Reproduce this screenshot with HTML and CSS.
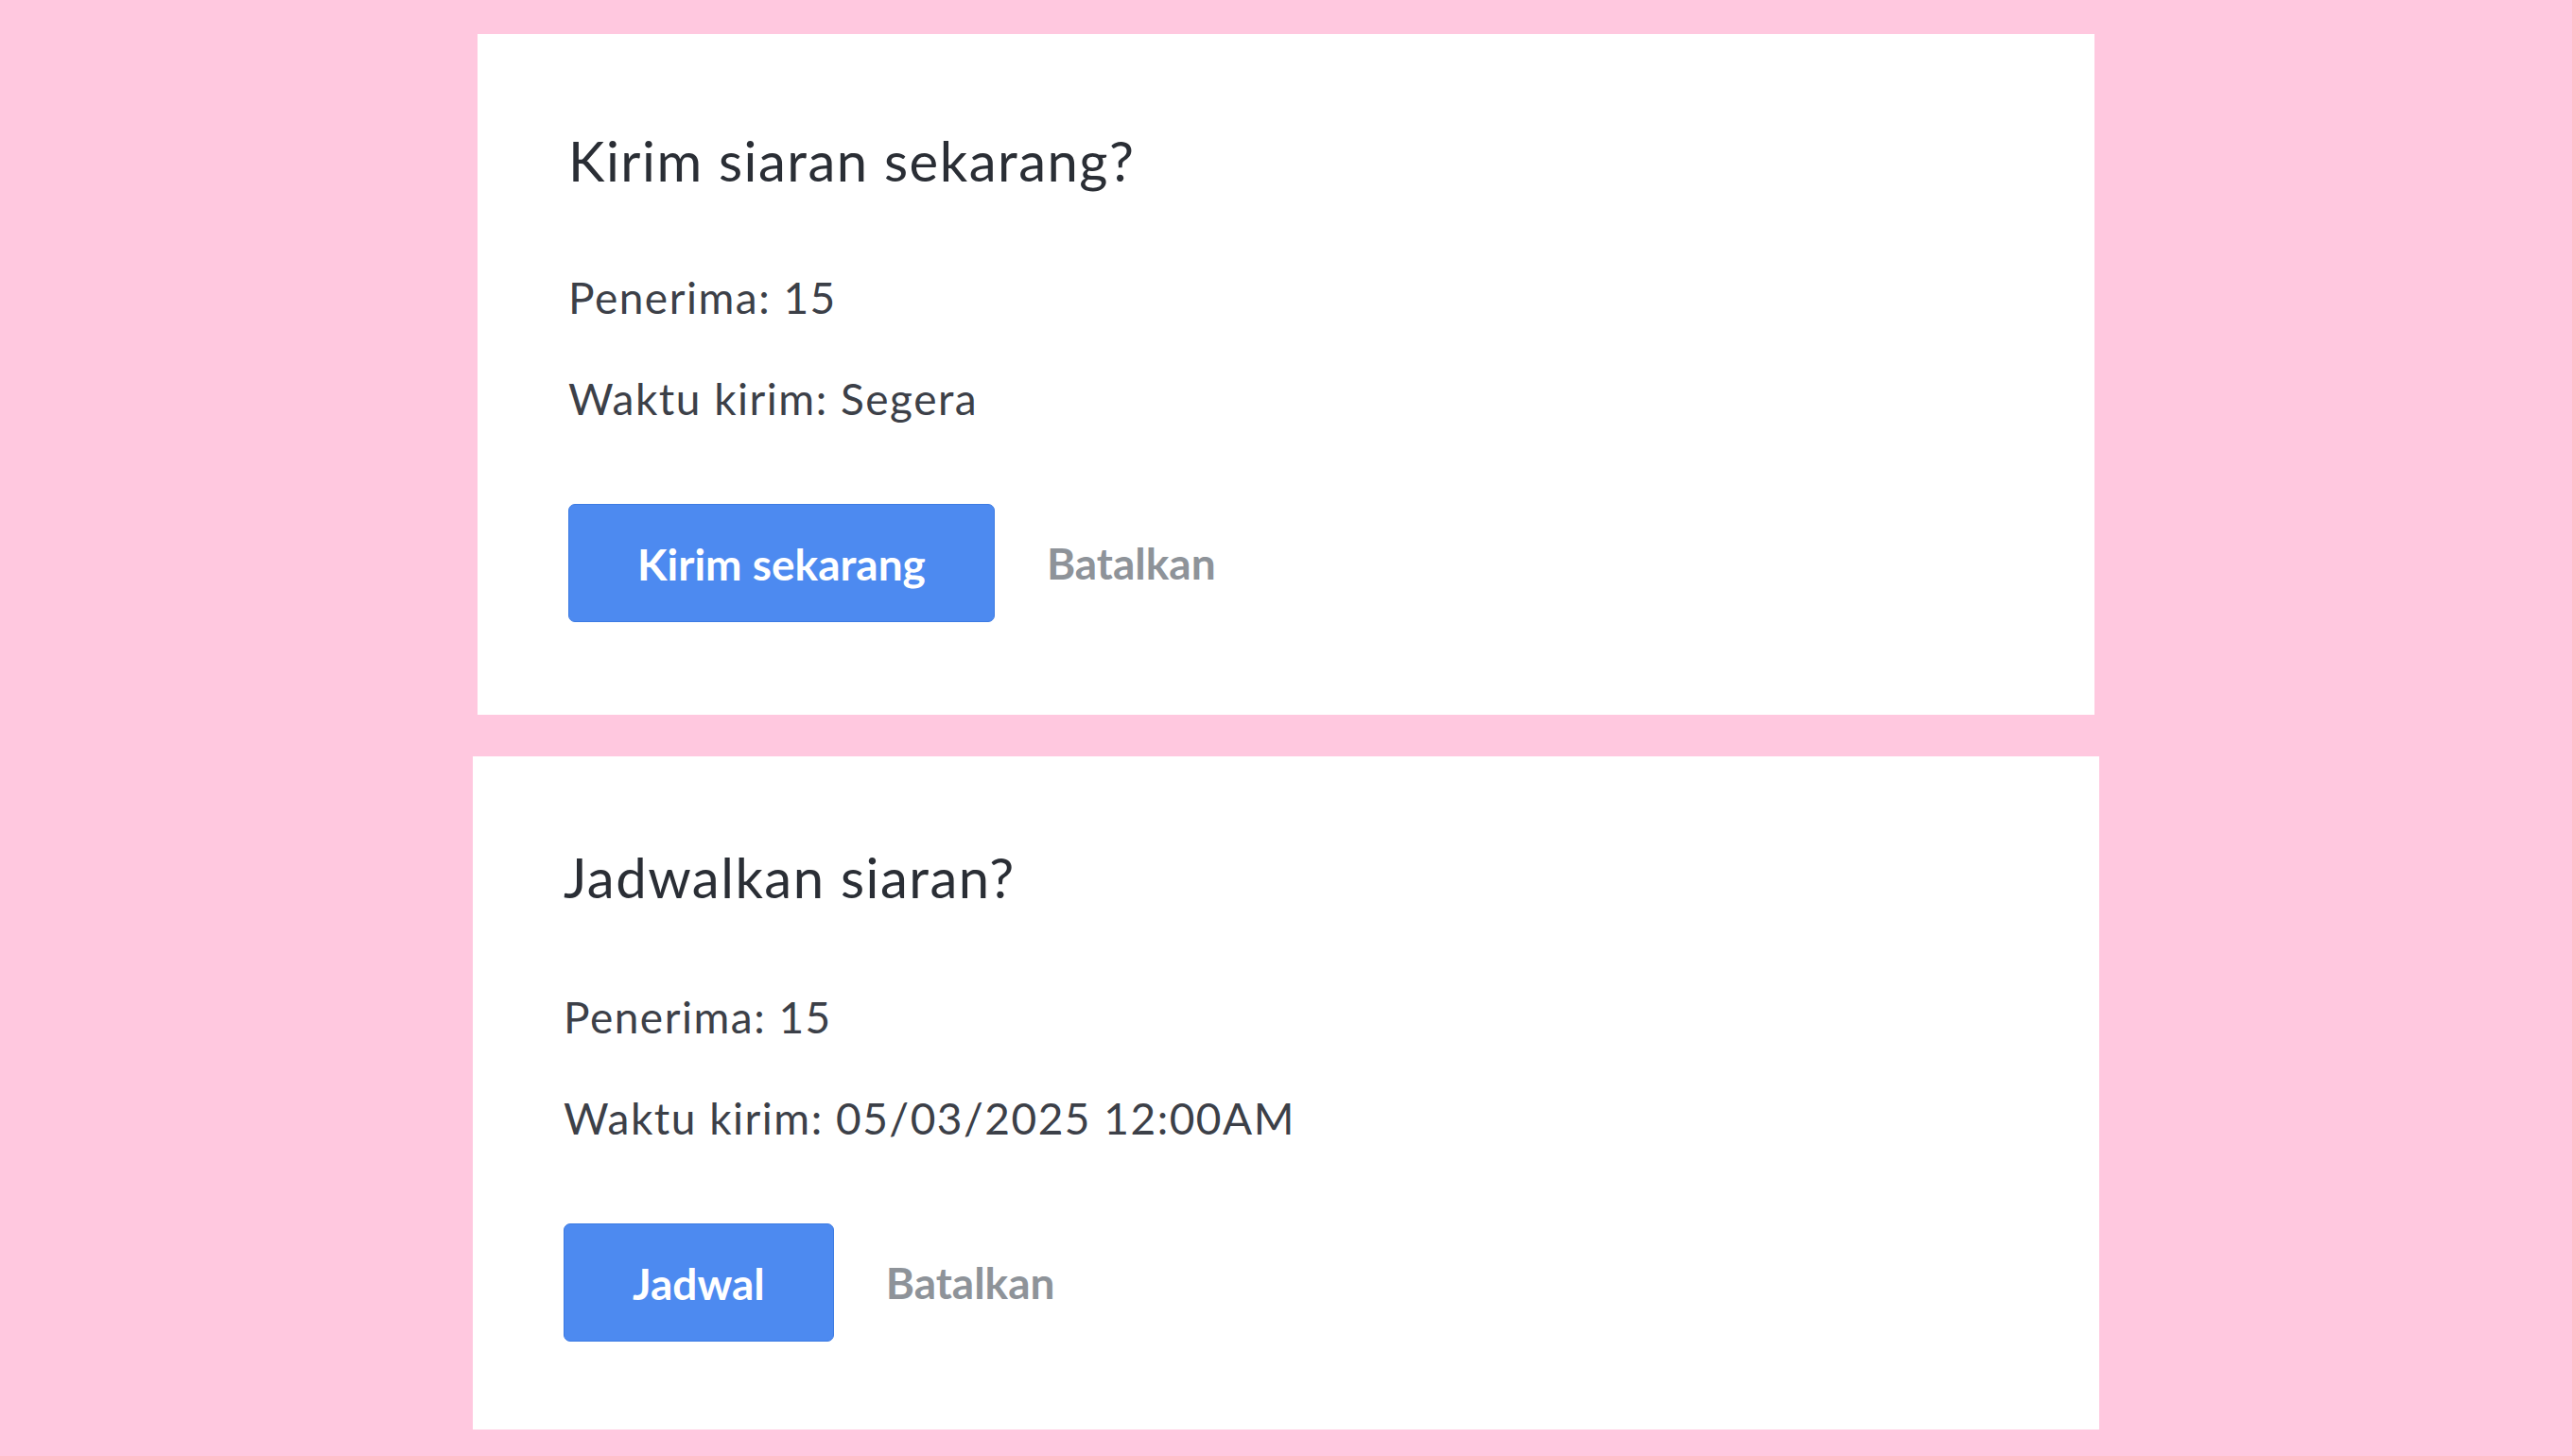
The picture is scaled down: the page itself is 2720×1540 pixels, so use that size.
FILE: index.html
```html
<!doctype html>
<html lang="id">
<head>
    <meta charset="utf-8"/>
    <title>Kirim siaran</title>
    <link rel="stylesheet" href="styles.css">
</head>
<body>
<div class="page">
    <div class="card card-now">
        <h2 class="card-title">Kirim siaran sekarang?</h2>
        <p class="info">Penerima: 15</p>
        <p class="info">Waktu kirim: Segera</p>
        <div class="actions">
            <button class="btn-primary">Kirim sekarang</button>
            <button class="btn-cancel">Batalkan</button>
        </div>
    </div>

    <div class="card card-schedule">
        <h2 class="card-title">Jadwalkan siaran?</h2>
        <p class="info">Penerima: 15</p>
        <p class="info">Waktu kirim: 05/03/2025 12:00AM</p>
        <div class="actions">
            <button class="btn-primary">Jadwal</button>
            <button class="btn-cancel">Batalkan</button>
        </div>
    </div>
</div>
</body>
</html>
```
FILE: styles.css
```css
body, h2, p {
    margin: 0;
    padding: 0;
}

body {
    background: #ffc8df;
    font-family: Lato, "Open Sans", sans-serif;
}

.page {
    display: flex;
    flex-direction: column;
    align-items: center;
    gap: 44px;
    padding-top: 36px;
}

.card {
    background: #fff;
    box-sizing: border-box;
    padding: 99px 96px 98px;
}

.card-now {
    width: 1710px;
}

.card-schedule {
    width: 1720px;
    padding-top: 93px;
    padding-bottom: 93px;
}

.card-title {
    font-size: 58px;
    line-height: 70px;
    font-weight: 400;
    letter-spacing: 1.5px;
    color: #2a2e35;
    margin-bottom: 80px;
}

.card-schedule .card-title {
    margin-bottom: 83px;
}

.info {
    font-size: 46px;
    line-height: 60px;
    letter-spacing: 1.5px;
    color: #3c4048;
    margin-bottom: 47px;
}

.info:last-of-type {
    margin-bottom: 81px;
}

.actions {
    display: flex;
    align-items: center;
    gap: 55px;
}

.actions button {
    font-family: Lato, "Open Sans", sans-serif;
    font-size: 46px;
    font-weight: 700;
    cursor: pointer;
}

.btn-primary {
    height: 125px;
    padding: 2px 72px 0;
    background: #4d8af0;
    border: 1px solid #3d7be3;
    border-radius: 7px;
    color: #fff;
}

.btn-cancel {
    padding: 0;
    background: none;
    border: none;
    color: #8e9399;
}
```
